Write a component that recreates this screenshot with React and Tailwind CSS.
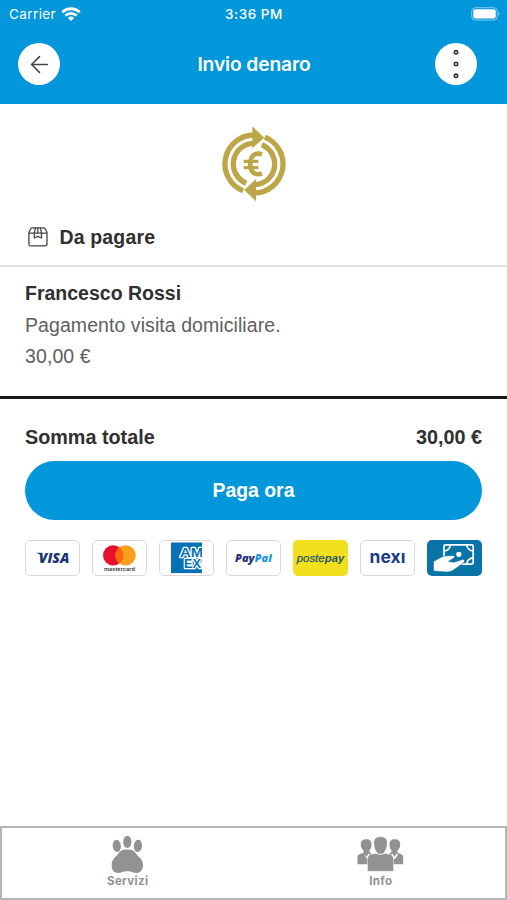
import { ArrowLeft } from "lucide-react";

const FONT = "font-['Liberation_Sans',Arial,sans-serif]";

function WifiIcon() {
  return (
    <svg width="20" height="15" viewBox="0 0 20 15" fill="none" stroke="white">
      <path d="M1.3 5.3a12.4 12.4 0 0 1 17.4 0" strokeWidth="2.9" />
      <path d="M4.4 8.6a8 8 0 0 1 11.2 0" strokeWidth="2.7" />
      <path d="M10 14 6.9 11a4.5 4.5 0 0 1 6.2 0Z" fill="white" stroke="none" />
    </svg>
  );
}

function BatteryIcon() {
  return (
    <svg width="30" height="14" viewBox="0 0 30 14" fill="none">
      <rect x="0.7" y="0.7" width="25.6" height="12.4" rx="3.6" stroke="white" strokeOpacity="0.5" />
      <rect x="2.3" y="2.3" width="22.4" height="9.2" rx="2" fill="white" />
      <path d="M27.6 4.8q2 2 0 4.2Z" fill="white" fillOpacity="0.6" />
    </svg>
  );
}

function DotsIcon() {
  return (
    <svg width="8" height="32" viewBox="0 0 8 32" fill="none" stroke="#333" strokeWidth="1.6">
      <circle cx="4" cy="4.3" r="1.7" />
      <circle cx="4" cy="16" r="1.7" />
      <circle cx="4" cy="27.8" r="1.7" />
    </svg>
  );
}

// Two concentric rings split into a pair of chasing arrows
function EuroCycleIcon() {
  return (
    <svg width="68" height="80" viewBox="48 28 204 240" fill="none" stroke="#bca647">
      <g strokeWidth="16">
        <path d="M150 61A87 87 0 0 0 117.4 228.7" />
        <path d="M150 86A62 62 0 0 0 126.8 205.5" />
        <path d="M182.6 67.3A87 87 0 0 1 150 235" />
        <path d="M173.2 90.5A62 62 0 0 1 150 210" />
      </g>
      <g fill="#bca647" stroke="none">
        <path d="M145 35 181 69 145 101Z" />
        <path d="M156 193 121 226 156 260Z" />
        <path d="M119 135H163V145H119ZM119 154H163V164H119Z" />
      </g>
      <path d="M174 119C152 112 139 124 139 149C139 174 154 184 174 176" strokeWidth="14" />
    </svg>
  );
}

function PackageIcon() {
  return (
    <svg width="20" height="20" viewBox="0 0 20 20" fill="none" stroke="#444" strokeWidth="1.3" strokeLinejoin="round">
      <path d="M.9 5.5 2.8 1.8Q3.3.8 4.5.8H15.5Q16.7.8 17.2 1.8L19 5.5V16.8Q19 18.9 16.9 18.9H3Q.9 18.9.9 16.8Z" />
      <path d="M.9 6.2H19M7.5.8 6.3 6.2V11L9.9 9.3 13.5 11V6.2L12.4.8M9.9.8V6.2" />
    </svg>
  );
}

function PawIcon() {
  return (
    <svg width="33" height="39" viewBox="95 46 98 118" fill="#929292">
      <ellipse cx="111.5" cy="79" rx="12.5" ry="18.5" transform="rotate(-6 111.5 79)" />
      <ellipse cx="143.5" cy="67" rx="12.5" ry="18.5" />
      <ellipse cx="175.5" cy="79" rx="12.5" ry="18.5" transform="rotate(6 175.5 79)" />
      <path d="M143 90C157 90 165 94 172 105C177 113 191 118 191 137C191 152 183 161 171 161C160 161 156 156 143 156C130 156 126 161 115 161C103 161 96 152 96 137C96 118 109 113 114 105C121 94 129 90 143 90Z" />
    </svg>
  );
}

function PeopleIcon() {
  return (
    <svg width="47" height="36" viewBox="82 47 140 108" fill="#929292">
      {/* Side figures */}
      <path d="M109 57C120 57 126 63 125 73C125 82 122 87 119 90V95L128 102V132H83V110Q83 104 89 102L101 97V90C96 86 93 80 93 73C92 63 98 57 109 57Z" />
      <path d="M195 57C184 57 178 63 179 73C179 82 182 87 185 90V95L176 102V132H220V110Q220 104 214 102L203 97V90C208 86 211 80 211 73C212 63 206 57 195 57Z" />
      <path d="M103 99 110 109 117 99 119 103 113 116 108 111ZM187 99 194 109 201 99 204 103 198 114 191 117 185 104Z" fill="white" />
      {/* Front figure */}
      <path d="M152 49C167 49 174 57 172 71C171 82 169 89 164 94V98L183 103Q191 106 191 114V153H113V114Q113 106 121 103L140 98V94C135 89 133 82 132 71C130 57 137 49 152 49Z" stroke="white" strokeWidth="1.5" />
      <path d="M137 98Q152 107 167 98" stroke="white" strokeWidth="3" fill="none" />
    </svg>
  );
}

function VisaLogo() {
  return (
    <svg width="53" height="35" viewBox="0 0 53 35">
      <path d="M10.7 11.7H15.6L16.6 18 14.6 14.2Q13.2 12.3 10.7 12.2Z" fill="#1a3475" />
      <text x="12.8" y="22" fontSize="14" fontWeight="900" fontStyle="italic" textLength="30.5" lengthAdjust="spacingAndGlyphs" fill="#1a3475" className="font-['Open_Sans',sans-serif]">VISA</text>
    </svg>
  );
}

function MastercardLogo() {
  return (
    <svg width="53" height="35" viewBox="0 0 53 35">
      <circle cx="20.2" cy="14.4" r="10.2" fill="#e8112d" />
      <circle cx="32.6" cy="14.4" r="10.2" fill="#f8a01c" />
      <path d="M26.4 6.3A10.2 10.2 0 0 1 26.4 22.5A10.2 10.2 0 0 1 26.4 6.3Z" fill="#fb6410" />
      <text x="11" y="29.7" fontSize="4.8" fontWeight="600" textLength="31" lengthAdjust="spacingAndGlyphs" fill="#333" className="font-['Inter',sans-serif]">mastercard</text>
    </svg>
  );
}

function AmexLogo() {
  return (
    <svg width="53" height="35" viewBox="0 0 53 35">
      <svg x="11" y="1.3" width="31" height="31" viewBox="0 0 31 31">
        <rect width="31" height="31" fill="#0870b4" />
        <text fill="#0870b4" stroke="white" strokeWidth="2.4" strokeLinejoin="round" paintOrder="stroke" fontWeight="700" fontSize="13" className="font-['Liberation_Sans',sans-serif]">
          <tspan x="9" y="15" textLength="23" lengthAdjust="spacingAndGlyphs">AM</tspan>
          <tspan x="13" y="25.8" textLength="17" lengthAdjust="spacingAndGlyphs">EX</tspan>
        </text>
        <path d="M31 18.5 28.5 21.5 31 24.5Z" fill="white" />
      </svg>
    </svg>
  );
}

function PayPalLogo() {
  return (
    <svg width="53" height="35" viewBox="0 0 53 35">
      <g fontSize="11" fontWeight="800" fontStyle="italic" className="font-['Open_Sans',sans-serif]">
        <text x="8" y="21" textLength="19.6" lengthAdjust="spacingAndGlyphs" fill="#26347f">Pay</text>
        <text x="27.8" y="21" textLength="17" lengthAdjust="spacingAndGlyphs" fill="#1e96d6">Pal</text>
      </g>
    </svg>
  );
}

function PostepayLogo() {
  return (
    <svg width="55" height="37" viewBox="0 0 55 37">
      <g fontSize="11.5" fontStyle="italic" fill="#26566a" className="font-['Liberation_Sans',sans-serif]">
        <text x="3.8" y="21.5" textLength="27.8" lengthAdjust="spacingAndGlyphs" stroke="#26566a" strokeWidth="0.25">poste</text>
        <text x="31.8" y="21.5" fontWeight="700" textLength="19.5" lengthAdjust="spacingAndGlyphs">pay</text>
      </g>
    </svg>
  );
}

function NexiLogo() {
  return (
    <svg width="53" height="35" viewBox="0 0 53 35">
      <text x="8.6" y="21.8" fontSize="17.5" fontWeight="700" textLength="35.8" lengthAdjust="spacingAndGlyphs" fill="#1b3c89" className="font-['Inter',sans-serif]">nexı</text>
    </svg>
  );
}

function CashLogo() {
  return (
    <svg width="55" height="37" viewBox="0 0 55 37" fill="none">
      <g stroke="white" strokeWidth="1.7">
        <rect x="17" y="4.8" width="29.2" height="19.3" rx="1.5" />
        <path d="M23.5 4.8A6.5 6.5 0 0 1 17 11M39.7 4.8A6.5 6.5 0 0 0 46.2 11M46.2 17.9A6.5 6.5 0 0 0 39.7 24.1" />
      </g>
      <circle cx="31.8" cy="14.3" r="2.6" fill="white" />
      <path d="M6.5 21.5C11 19 14.8 16.4 18 16L25.8 15.5C28.4 15.6 28 17.8 26.2 18.4L21.5 21.4L26.6 22.3L35.5 19.5C37.9 19.1 38.2 21.4 36.4 22.7L28 29C25 31.3 21.8 32.3 18.2 31.9L6.5 31Z" fill="white" stroke="#0a73a7" strokeWidth="0.6" />
    </svg>
  );
}

const paymentMethods = [
  { id: "visa", Logo: VisaLogo, frame: "border border-[#dadada] bg-white" },
  { id: "mastercard", Logo: MastercardLogo, frame: "border border-[#dadada] bg-white" },
  { id: "amex", Logo: AmexLogo, frame: "border border-[#dadada] bg-white" },
  { id: "paypal", Logo: PayPalLogo, frame: "border border-[#dadada] bg-white" },
  { id: "postepay", Logo: PostepayLogo, frame: "bg-[#f2df1d]" },
  { id: "nexi", Logo: NexiLogo, frame: "border border-[#dadada] bg-white" },
  { id: "cash", Logo: CashLogo, frame: "bg-[#0a73a7]" },
];

function Header() {
  return (
    <header className="h-[103.5px] bg-[#0296da] text-white font-['Inter',sans-serif]">
      {/* Status bar */}
      <div className="grid h-7 grid-cols-3 items-center pl-[9px] pr-[8px] text-[13.5px]">
        <div className="flex items-center gap-[5px]">
          <span className="tracking-[0.4px]">Carrier</span>
          <WifiIcon />
        </div>
        <span className="text-center text-[13.5px] font-medium tracking-[0.55px]">3:36 PM</span>
        <div className="-mr-0.5 flex justify-end">
          <BatteryIcon />
        </div>
      </div>

      {/* Navigation */}
      <div className="mt-[15px] flex h-[42px] items-center pl-[18px] pr-[30px]">
        <button className="flex size-[42px] items-center justify-center rounded-full bg-white">
          <ArrowLeft className="size-[27px] text-[#444]" strokeWidth={1.4} />
        </button>
        <h1 className="flex-1 pl-[13px] pt-[1px] text-center text-[19.3px] font-semibold tracking-[-0.15px]">Invio denaro</h1>
        <button className="flex size-[42px] items-center justify-center rounded-full bg-white">
          <DotsIcon />
        </button>
      </div>
    </header>
  );
}

function TabBar() {
  return (
    <nav className="grid h-[74px] grid-cols-2 border-2 border-[#b5b5b5] bg-white font-['Inter',sans-serif] text-[11.5px] font-bold leading-[14px] text-[#929292]">
      <button className="flex flex-col items-center pt-[7px]">
        <PawIcon />
        <span className="tracking-[0.35px]">Servizi</span>
      </button>
      <button className="flex flex-col items-center pl-[3px] pt-[8px]">
        <PeopleIcon />
        <span className="mt-[2px] tracking-[0.35px]">Info</span>
      </button>
    </nav>
  );
}

export default function App() {
  return (
    <div className={`flex h-[900px] w-[507px] flex-col overflow-hidden bg-white text-[#303030] ${FONT}`}>
      <Header />

      <main className="flex-1">
        <div className="flex h-[105px] justify-center pt-[20.5px]">
          <EuroCycleIcon />
        </div>

        <div className="flex h-[58px] items-center gap-[12px] border-b-2 border-[#e2e2e2] pl-[27.5px]">
          <PackageIcon />
          <h2 className="pt-[3px] text-[19.5px] font-bold tracking-[0.15px]">Da pagare</h2>
        </div>

        {/* Payment details */}
        <section className="h-[132px] border-b-[3px] border-[#191919] px-[25px] pt-[11.5px] text-[19.5px] leading-[31.5px] text-[#606060]">
          <p className="font-bold text-[#303030]">Francesco Rossi</p>
          <p className="tracking-[0.07px]">Pagamento visita domiciliare.</p>
          <p className="tracking-[0.1px]">30,00 €</p>
        </section>

        <section className="px-[25px] pt-[23px]">
          <div className="flex justify-between text-[19.8px] font-bold leading-[31px]">
            <span>Somma totale</span>
            <span>30,00 €</span>
          </div>
          <button className="mt-[8.5px] h-[59px] w-full rounded-full bg-[#0296da] pt-[1px] text-[19.4px] font-bold text-white">
            Paga ora
          </button>
          <div className="mt-[20px] flex justify-between">
            {paymentMethods.map(({ id, Logo, frame }) => (
              <div key={id} className={`h-[36px] w-[55px] overflow-hidden rounded-[5px] ${frame}`}>
                <Logo />
              </div>
            ))}
          </div>
        </section>
      </main>

      <TabBar />
    </div>
  );
}
